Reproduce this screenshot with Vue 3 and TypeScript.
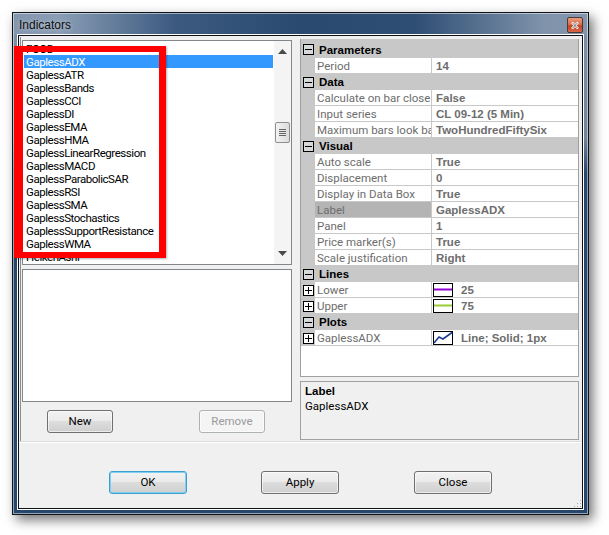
<script setup lang="ts">
interface Row { name?: string; value?: string; head?: string; exp?: boolean; swatch?: string; sel?: boolean }
const items: string[] = ['GaplessADX','GaplessATR','GaplessBands','GaplessCCI','GaplessDI','GaplessEMA','GaplessHMA','GaplessLinearRegression','GaplessMACD','GaplessParabolicSAR','GaplessRSI','GaplessSMA','GaplessStochastics','GaplessSupportResistance','GaplessWMA']
const rows: Row[] = [
  { head: 'Parameters' },
  { name: 'Period', value: '14' },
  { head: 'Data' },
  { name: 'Calculate on bar close', value: 'False' },
  { name: 'Input series', value: 'CL 09-12 (5 Min)' },
  { name: 'Maximum bars look back', value: 'TwoHundredFiftySix' },
  { head: 'Visual' },
  { name: 'Auto scale', value: 'True' },
  { name: 'Displacement', value: '0' },
  { name: 'Display in Data Box', value: 'True' },
  { name: 'Label', value: 'GaplessADX', sel: true },
  { name: 'Panel', value: '1' },
  { name: 'Price marker(s)', value: 'True' },
  { name: 'Scale justification', value: 'Right' },
  { head: 'Lines' },
  { name: 'Lower', value: '25', exp: true, swatch: '#9400d3' },
  { name: 'Upper', value: '75', exp: true, swatch: '#9acd32' },
  { head: 'Plots' },
  { name: 'GaplessADX', value: 'Line; Solid; 1px', exp: true, swatch: 'plot' },
]
</script>

<template>
  <div class="page">
    <div class="window">
      <div class="titlebar">
        <span class="title">Indicators</span>
        <span class="close"><svg width="10" height="9" viewBox="0 0 10 9"><path d="M2 1.5 L8 7.5 M8 1.5 L2 7.5" stroke="#fff" stroke-width="2.4" /><path d="M2.6 2 L7.4 7 M7.4 2 L2.6 7" stroke="#3d4a5c" stroke-width="0.8" /></svg></span>
      </div>
      <div class="content">
        <div class="panes">
          <div class="left">
            <div class="listbox">
              <div class="list">
                <div class="item">FOOD</div>
                <div v-for="(it, i) in items" :key="it" class="item" :class="{ active: i === 0 }">{{ it }}</div>
                <div class="item">HeikenAshi</div>
              </div>
              <div class="sbar">
                <svg class="arrow" width="9" height="5" viewBox="0 0 9 5"><path d="M4.5 0 L9 5 H0 Z" fill="#4a4a4a" /></svg>
                <div class="thumb"><i></i><i></i><i></i><i></i></div>
                <svg class="arrow" width="9" height="5" viewBox="0 0 9 5"><path d="M4.5 5 L9 0 H0 Z" fill="#4a4a4a" /></svg>
              </div>
            </div>
            <div class="blank"></div>
            <div class="leftbtns">
              <button class="btn small">New</button>
              <button class="btn small disabled">Remove</button>
            </div>
          </div>
          <div class="right">
            <div class="grid">
              <template v-for="r in rows" :key="r.head || r.name">
                <div v-if="r.head" class="head">
                  <span class="box"><b class="h"></b></span>
                  <span class="headtext">{{ r.head }}</span>
                </div>
                <div v-else class="row">
                  <div class="gutter"><span v-if="r.exp" class="box"><b class="h"></b><b class="v"></b></span></div>
                  <div class="name" :class="{ sel: r.sel }"><span>{{ r.name }}</span></div>
                  <div class="value" :class="{ 'has-swatch': r.swatch }">
                    <svg v-if="r.swatch" class="swatch" width="20" height="14" viewBox="0 0 20 14">
                      <rect x="0.5" y="0.5" width="19" height="13" fill="#fff" stroke="#000" />
                      <path v-if="r.swatch === 'plot'" d="M1 12 L6 6 L10 8 L19 1.5" fill="none" stroke="#1a3f8f" stroke-width="1.6" />
                      <rect v-else x="1" y="5.5" width="18" height="2" :fill="r.swatch" />
                    </svg>
                    {{ r.value }}
                  </div>
                </div>
              </template>
            </div>
            <div class="help">
              <div class="help-title">Label</div>
              <div class="help-text">GaplessADX</div>
            </div>
          </div>
        </div>
        <div class="footer">
          <button class="btn wide focus">OK</button>
          <button class="btn wide">Apply</button>
          <button class="btn wide">Close</button>
        </div>
        <svg class="grip" width="9" height="9" viewBox="0 0 9 9"><path d="M7 1h1v1H7zM4 4h1v1H4zM7 4h1v1H7zM1 7h1v1H1zM4 7h1v1H4zM7 7h1v1H7z" fill="#a9a9a9" /></svg>
      </div>
      <div class="redbox"></div>
    </div>
  </div>
</template>

<style>
html, body { margin: 0; background: #fff; }
</style>

<style scoped>
.page {
  width: 609px;
  height: 535px;
  padding: 12px 0 0 12px;
  box-sizing: border-box;
  font-family: Roboto, "Liberation Sans", Arial, sans-serif;
  font-size: 11.5px;
  overflow: hidden;
}
.window {
  position: relative;
  width: 577px;
  height: 503px;
  box-sizing: border-box;
  border: 1px solid #10141a;
  background: linear-gradient(to bottom, #7d90a8 0, #6f8399 25%, #27466b 32%, #27466b 100%);
  box-shadow: 4px 5px 11px rgba(0, 0, 0, 0.55);
  padding: 0 5px 5px;
  display: flex;
  flex-direction: column;
  outline: 1px solid rgba(255,255,255,0.5);
  outline-offset: -2px;
}
.titlebar {
  height: 22px;
  margin: 0 -5px;
  padding: 2px 5px 0 6px;
  box-sizing: border-box;
  display: flex;
  align-items: center;
  justify-content: space-between;
  background: linear-gradient(to right, #8396ad 0, #8a9db4 8%, #3c5a80 28%, #2a4a70 50%, #2f4e74 70%, #7e92aa 92%, #8396ad 100%);
}
.title { font-family: "Liberation Sans", Arial, sans-serif; font-size: 12px; color: #0c0c0c; text-shadow: 0 0 4px rgba(255,255,255,0.6); }
.close {
  width: 16px;
  height: 16px;
  border: 1px solid #4a3a38;
  border-radius: 2px;
  box-sizing: border-box;
  background: linear-gradient(to bottom, #e89a80 0, #d96a47 50%, #c4401e 55%, #d8684a 100%);
  display: flex;
  align-items: center;
  justify-content: center;
}
.content {
  position: relative;
  flex: 1;
  background: #f0f0f0;
  border: 1px solid #0e1218;
  box-shadow: 0 0 0 1px #fff;
  display: flex;
  flex-direction: column;
  box-sizing: border-box;
}
.panes {
  height: 405px;
  display: flex;
  border-bottom: 1px solid #dcdcdc;
  box-shadow: 0 1px 0 #fff;
}
.left {
  width: 280px;
  padding: 3px 0 0 1px;
  border-left: 1px solid #8c8c8c;
  box-sizing: border-box;
  margin-left: 1px;
  margin-top: 1px;
}
.listbox {
  width: 270px;
  height: 225px;
  box-sizing: border-box;
  border: 1px solid #82878c;
  background: #fff;
  display: flex;
  overflow: hidden;
}
.list {
  flex: 1;
  padding: 1px 1px 0 1px;
  overflow: hidden;
}
.item {
  height: 13px;
  line-height: 14px;
  padding-left: 2px;
  color: #000;
  white-space: nowrap;
  letter-spacing: -0.45px;
}
.item.active { background: #3399ff; color: #fff; }
.sbar {
  width: 17px;
  background: #f4f4f4;
  position: relative;
  display: flex;
  flex-direction: column;
  align-items: center;
  justify-content: space-between;
  padding: 8px 0;
  box-sizing: border-box;
}
.thumb {
  position: absolute;
  top: 81px;
  left: 1px;
  width: 13px;
  height: 19px;
  border: 1px solid #8e8f8f;
  border-radius: 2px;
  background: linear-gradient(to right, #f3f3f3, #dcdcdc);
  display: flex;
  flex-direction: column;
  align-items: center;
  justify-content: center;
  gap: 1px;
}
.thumb i { display: block; width: 7px; height: 1px; background: #666; }
.blank {
  width: 270px;
  height: 133px;
  margin-top: 4px;
  box-sizing: border-box;
  border: 1px solid #82878c;
  background: #fff;
}
.leftbtns {
  display: flex;
  gap: 86px;
  padding: 8px 0 0 25px;
}
.btn {
  font: inherit;
  color: #000;
  padding: 0 0 2px;
  border: 1px solid #707070;
  border-radius: 3px;
  height: 23px;
  background: linear-gradient(to bottom, #f2f2f2 0, #ebebeb 45%, #dddddd 50%, #cfcfcf 100%);
  box-shadow: inset 0 0 0 1px rgba(255,255,255,0.6);
}
.btn.small { width: 66px; }
.btn.wide { width: 78px; }
.btn.focus { border-color: #3c9fd0; box-shadow: inset 0 0 0 1px #7fd0f0; }
.btn.disabled {
  color: #9a9a9a;
  border-color: #adb2b5;
  background: #f4f4f4;
}
.right {
  width: 279px;
  padding-top: 3px;
  box-sizing: border-box;
}
.grid {
  height: 338px;
  box-sizing: border-box;
  border: 1px solid #a0a0a0;
  border-top: 0;
  background: #fff;
  overflow: hidden;
}
.head {
  height: 16px;
  background: #c8c8c8;
  display: flex;
  align-items: center;
  font-family: "Liberation Sans", Arial, sans-serif;
  font-weight: 700;
  color: #000;
}
.head:first-child { height: 19px; padding-top: 2px; box-sizing: border-box; }
.headtext { margin-left: 5px; }
.box {
  position: relative;
  display: block;
  width: 9px;
  height: 9px;
  border: 1px solid #000;
  margin-left: 2px;
  background: #fff;
  flex: none;
}
.head .box { background: #d8d8d8; }
.box .h { position: absolute; left: 1px; top: 4px; width: 7px; height: 1px; background: #000; }
.box .v { position: absolute; left: 4px; top: 1px; width: 1px; height: 7px; background: #000; }
.row {
  height: 16px;
  display: flex;
  color: #6d6d6d;
}
.gutter {
  width: 14px;
  background: #c8c8c8;
  display: flex;
  align-items: center;
  flex: none;
}
.name {
  width: 117px;
  flex: none;
  box-sizing: border-box;
  padding-left: 2px;
  line-height: 16px;
  overflow: hidden;
  white-space: nowrap;
  border-bottom: 1px solid #c8c8c8;
  border-right: 1px solid #c8c8c8;
}
.name.sel { background: #b4b4b4; }
.value {
  flex: 1;
  box-sizing: border-box;
  padding-left: 4px;
  line-height: 16px;
  font-family: "Liberation Sans", Arial, sans-serif;
  font-weight: 700;
  border-bottom: 1px solid #c8c8c8;
  white-space: nowrap;
  display: flex;
  align-items: center;
}
.value.has-swatch { padding-left: 1px; }
.swatch { margin-right: 8px; flex: none; }
.help {
  height: 59px;
  margin-top: 4px;
  box-sizing: border-box;
  border: 1px solid #a0a0a0;
  padding: 2px 4px;
  line-height: 15px;
}
.help-title { font-family: "Liberation Sans", Arial, sans-serif; font-weight: 700; color: #000; }
.help-text { color: #000; }
.footer {
  display: flex;
  gap: 74px;
  padding: 29px 0 0 90px;
}
.footer .btn:last-child { margin-left: 1px; }
.grip { position: absolute; right: 0; bottom: 0; }
.redbox {
  position: absolute;
  left: 1px;
  top: 33px;
  width: 152px;
  height: 212px;
  box-sizing: border-box;
  border: solid #ff0000;
  border-width: 6px 7px 6px 9px;
  box-shadow: 1px 1px 2px rgba(0,0,0,0.3);
  pointer-events: none;
}
</style>
